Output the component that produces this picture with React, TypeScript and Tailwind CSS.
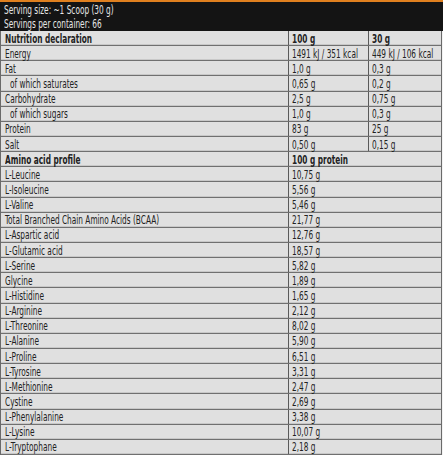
import React from "react";

type Row = { label: string; a?: string; b?: string; bold?: boolean; indent?: boolean; span?: boolean };

const nutrition: Row[] = [
  { label: "Nutrition declaration", a: "100 g", b: "30 g", bold: true },
  { label: "Energy", a: "1491 kJ / 351 kcal", b: "449 kJ / 106 kcal" },
  { label: "Fat", a: "1,0 g", b: "0,3 g" },
  { label: "of which saturates", a: "0,65 g", b: "0,2 g", indent: true },
  { label: "Carbohydrate", a: "2,5 g", b: "0,75 g" },
  { label: "of which sugars", a: "1,0 g", b: "0,3 g", indent: true },
  { label: "Protein", a: "83 g", b: "25 g" },
  { label: "Salt", a: "0,50 g", b: "0,15 g" },
];

const amino: Row[] = [
  { label: "Amino acid profile", a: "100 g protein", bold: true, span: true },
  { label: "L-Leucine", a: "10,75 g", span: true },
  { label: "L-Isoleucine", a: "5,56 g", span: true },
  { label: "L-Valine", a: "5,46 g", span: true },
  { label: "Total Branched Chain Amino Acids (BCAA)", a: "21,77 g", span: true },
  { label: "L-Aspartic acid", a: "12,76 g", span: true },
  { label: "L-Glutamic acid", a: "18,57 g", span: true },
  { label: "L-Serine", a: "5,82 g", span: true },
  { label: "Glycine", a: "1,89 g", span: true },
  { label: "L-Histidine", a: "1,65 g", span: true },
  { label: "L-Arginine", a: "2,12 g", span: true },
  { label: "L-Threonine", a: "8,02 g", span: true },
  { label: "L-Alanine", a: "5,90 g", span: true },
  { label: "L-Proline", a: "6,51 g", span: true },
  { label: "L-Tyrosine", a: "3,31 g", span: true },
  { label: "L-Methionine", a: "2,47 g", span: true },
  { label: "Cystine", a: "2,69 g", span: true },
  { label: "L-Phenylalanine", a: "3,38 g", span: true },
  { label: "L-Lysine", a: "10,07 g", span: true },
  { label: "L-Tryptophane", a: "2,18 g", span: true },
];

function Txt({ children, bold }: { children: React.ReactNode; bold?: boolean }) {
  return (
    <span
      className={
        "inline-block origin-left scale-x-[0.63] whitespace-nowrap " +
        (bold ? "font-bold" : "font-normal")
      }
    >
      {children}
    </span>
  );
}

function TableRow({ r }: { r: Row }) {
  return (
    <div className="flex flex-1 border-b border-[#707070] bg-[#e0e0e0] shadow-[inset_0_-1px_0_#c8c8c8]">
      <div className={"flex w-[287px] shrink-0 items-center " + (r.indent ? "pl-[9px]" : "pl-[4px]")}>
        <Txt bold={r.bold}>{r.label}</Txt>
      </div>
      {r.span ? (
        <div className="flex flex-1 items-center border-l border-[#5a5a5a] pl-[3px]">
          <Txt bold={r.bold}>{r.a}</Txt>
        </div>
      ) : (
        <>
          <div className="flex w-[80px] shrink-0 items-center border-l border-[#5a5a5a] pl-[3px]">
            <Txt bold={r.bold}>{r.a}</Txt>
          </div>
          <div className="flex flex-1 items-center border-l border-[#5a5a5a] pl-[3px]">
            <Txt bold={r.bold}>{r.b}</Txt>
          </div>
        </>
      )}
    </div>
  );
}

export default function App() {
  return (
    <div
      className="flex h-[455px] w-[443px] flex-col overflow-hidden bg-[#f2f2f2] text-[13px] leading-none text-[#222222]"
      style={{ fontFamily: '"DejaVu Sans Condensed", "Liberation Sans", sans-serif' }}
    >
      <div className="shrink-0 border-t-2 border-[#e0801f] bg-[#141414] text-[#e6e6e6]">
        <div className="flex h-[14px] items-center pl-[4px]">
          <Txt>Serving size: ~1 Scoop (30 g)</Txt>
        </div>
        <div className="flex h-[15px] items-center pl-[4px]">
          <Txt>Servings per container: 66</Txt>
        </div>
      </div>
      <div className="flex w-[442px] flex-1 flex-col border-l border-r border-[#6a6a6a]">
        {nutrition.map((r) => (
          <TableRow key={r.label} r={r} />
        ))}
        {amino.map((r) => (
          <TableRow key={r.label} r={r} />
        ))}
      </div>
    </div>
  );
}
